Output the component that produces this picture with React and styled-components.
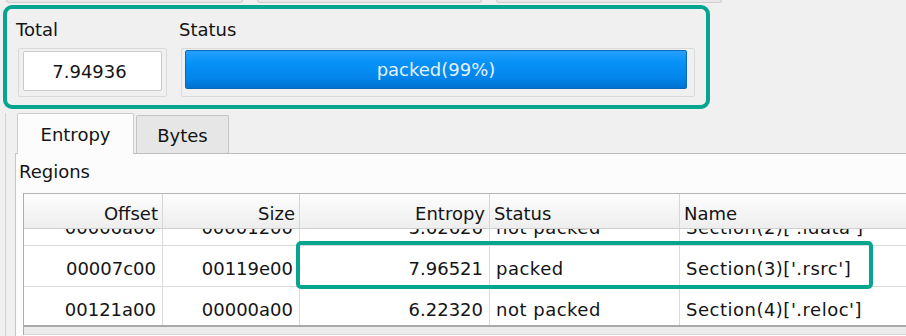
import styled, { createGlobalStyle } from 'styled-components';

const teal = '#05a58f';

const GlobalStyle = createGlobalStyle`
    * { box-sizing: border-box; }
    html, body {
        margin: 0;
        background: #f0f0f0;
        font-family: "DejaVu Sans", "Liberation Sans", sans-serif;
        font-size: 18px;
        color: #141414;
        overflow: hidden;
    }
`

const Page = styled.div`
    width: 906px;
    height: 336px;
    overflow: hidden;
    display: flex;
    flex-direction: column;
`;

const TopStrip = styled.div`
    display: flex;
    gap: 14px;
    height: 3px;
    padding-left: 6px;
`;

const StripButton = styled.div`
    width: ${p => p.$w}px;
    height: 3px;
    background: #e8e8e8;
    border: 1px solid #cfcfcf;
    border-top: none;
    border-radius: 0 0 3px 3px;
`;

const GroupBox = styled.div`
    margin: 2px 0 0 3px;
    width: 707px;
    border: 4px solid ${teal};
    border-radius: 9px;
    padding: 10px 10px 8px 11px;
    display: flex;
    gap: 14px;
`;

const Field = styled.div`
    display: flex;
    flex-direction: column;
    width: ${p => p.$w}px;
`;

const Label = styled.div`
    line-height: 21px;
    margin: 0 0 8px -2px;
`;

const Frame = styled.div`
    height: 49px;
    border: 1px solid #dadada;
    border-radius: 2px;
    padding: ${p => p.$pad};
    display: flex;
`;

const Input = styled.div`
    flex: 1;
    background: #fff;
    border: 1px solid #cacaca;
    border-radius: 2px;
    display: flex;
    align-items: center;
    justify-content: center;
    padding-right: 6px;
`;

const ProgressBar = styled.div`
    flex: 1;
    border: 1px solid #0b68b8;
    border-radius: 2px;
    background: linear-gradient(to bottom, #26a0ff 0%, #0792f7 30%, #0386ec 70%, #0073d2 100%);
    color: #e6f1ff;
    display: flex;
    align-items: center;
    justify-content: center;
    padding-bottom: 1px;
`;

const Lower = styled.div`
    flex: 1;
    margin: 4px 0 0 5px;
    border-left: 1px solid #d2d2d2;
    padding-left: 9px;
    display: flex;
    flex-direction: column;
    min-height: 0;
`;

const TabBar = styled.div`
    height: 40px;
    display: flex;
    align-items: flex-end;
    gap: 2px;
    padding-left: 2px;
`;

const Tab = styled.div`
    width: ${p => p.$active ? 117 : 93}px;
    height: ${p => p.$active ? 41 : 38}px;
    margin-bottom: ${p => p.$active ? -1 : 0}px;
    position: relative;
    z-index: 1;
    background: ${p => p.$active ? '#fcfcfc' : '#e6e6e6'};
    border: 1px solid ${p => p.$active ? '#cdcdcd' : '#c4c4c4'};
    border-bottom: none;
    border-radius: 2px 2px 0 0;
    text-align: center;
    line-height: 21px;
    padding-top: ${p => p.$active ? 10 : 9}px;
`;

const Pane = styled.div`
    flex: 1;
    background: #fcfcfc;
    border-left: 1px solid #c6c6c6;
    border-top: 1px solid #bdbdbd;
    padding: 7px 0 0 3px;
    min-height: 0;
`;

const PaneLabel = styled.div`
    line-height: 21px;
    margin-bottom: 11px;
`;

const TableWrap = styled.div`
    position: relative;
    margin-left: 4px;
    width: 1100px;
    border-left: 1px solid #adadad;
    border-top: 1px solid #b4b4b4;
`;

const columns = '139px 137px 190px 190px 443px';

const HeaderRow = styled.div`
    display: grid;
    grid-template-columns: ${columns};
    border-bottom: 1px solid #cfcfcf;
`;

const HeaderCell = styled.div`
    height: 34px;
    padding: 9px 4px 0 4px;
    line-height: 21px;
    text-align: ${p => p.$align};
    border-right: 1px solid #d6d6d6;
    background: linear-gradient(to bottom, #fdfdfd, #eeeeee);
    white-space: nowrap;
`;

const BodyViewport = styled.div`
    height: 98px;
    overflow: hidden;
    background: #fff;
    border-bottom: 2px solid #a9a9a9;
`;

const Rows = styled.div`
    margin-top: -24px;
`;

const Row = styled.div`
    display: grid;
    grid-template-columns: ${columns};
`;

const Cell = styled.div`
    height: 41px;
    padding: 12px ${p => p.$align === 'right' ? '6px' : '5px'} 0 ${p => p.$align === 'right' ? '4px' : '6px'};
    line-height: 21px;
    text-align: ${p => p.$align};
    letter-spacing: ${p => p.$align === 'left' ? '0.5px' : '0'};
    border-right: 1px solid #dadada;
    border-bottom: 1px solid #dadada;
    background: #fff;
    white-space: nowrap;
`;

const ScrollStrip = styled.div`
    height: 8px;
    background: #ebebeb;
    border-bottom: 1px solid #d8d8d8;
`;

const Highlight = styled.div`
    position: absolute;
    left: 272px;
    top: 47px;
    width: 577px;
    height: 48px;
    border: 4px solid ${teal};
    border-radius: 5px;
    pointer-events: none;
`;

const header = [
    { label: 'Offset', align: 'right' },
    { label: 'Size', align: 'right' },
    { label: 'Entropy', align: 'right' },
    { label: 'Status', align: 'left' },
    { label: 'Name', align: 'left' },
];

const regions = [
    ['00006a00', '00001200', '3.62626', 'not packed', "Section(2)['.idata']"],
    ['00007c00', '00119e00', '7.96521', 'packed', "Section(3)['.rsrc']"],
    ['00121a00', '00000a00', '6.22320', 'not packed', "Section(4)['.reloc']"],
];

export default function App() {
    return (
        <Page>
            <GlobalStyle />

            <TopStrip>
                <StripButton $w={237} />
                <StripButton $w={225} />
                <StripButton $w={226} />
            </TopStrip>

            <GroupBox>
                <Field $w={149}>
                    <Label>Total</Label>
                    <Frame $pad="2px 4px 5px 4px">
                        <Input>7.94936</Input>
                    </Frame>
                </Field>
                <Field $w={514}>
                    <Label>Status</Label>
                    <Frame $pad="1px 7px 7px 3px">
                        <ProgressBar>packed(99%)</ProgressBar>
                    </Frame>
                </Field>
            </GroupBox>

            <Lower>
                <TabBar>
                    <Tab $active>Entropy</Tab>
                    <Tab>Bytes</Tab>
                </TabBar>
                <Pane>
                    <PaneLabel>Regions</PaneLabel>
                    <TableWrap>
                        <HeaderRow>
                            {header.map(h => (
                                <HeaderCell key={h.label} $align={h.align}>{h.label}</HeaderCell>
                            ))}
                        </HeaderRow>
                        <BodyViewport>
                            <Rows>
                                {regions.map(r => (
                                    <Row key={r[0]}>
                                        {r.map((v, i) => (
                                            <Cell key={i} $align={header[i].align}>{v}</Cell>
                                        ))}
                                    </Row>
                                ))}
                            </Rows>
                        </BodyViewport>
                        <ScrollStrip />
                        <Highlight />
                    </TableWrap>
                </Pane>
            </Lower>
        </Page>
    )
}
